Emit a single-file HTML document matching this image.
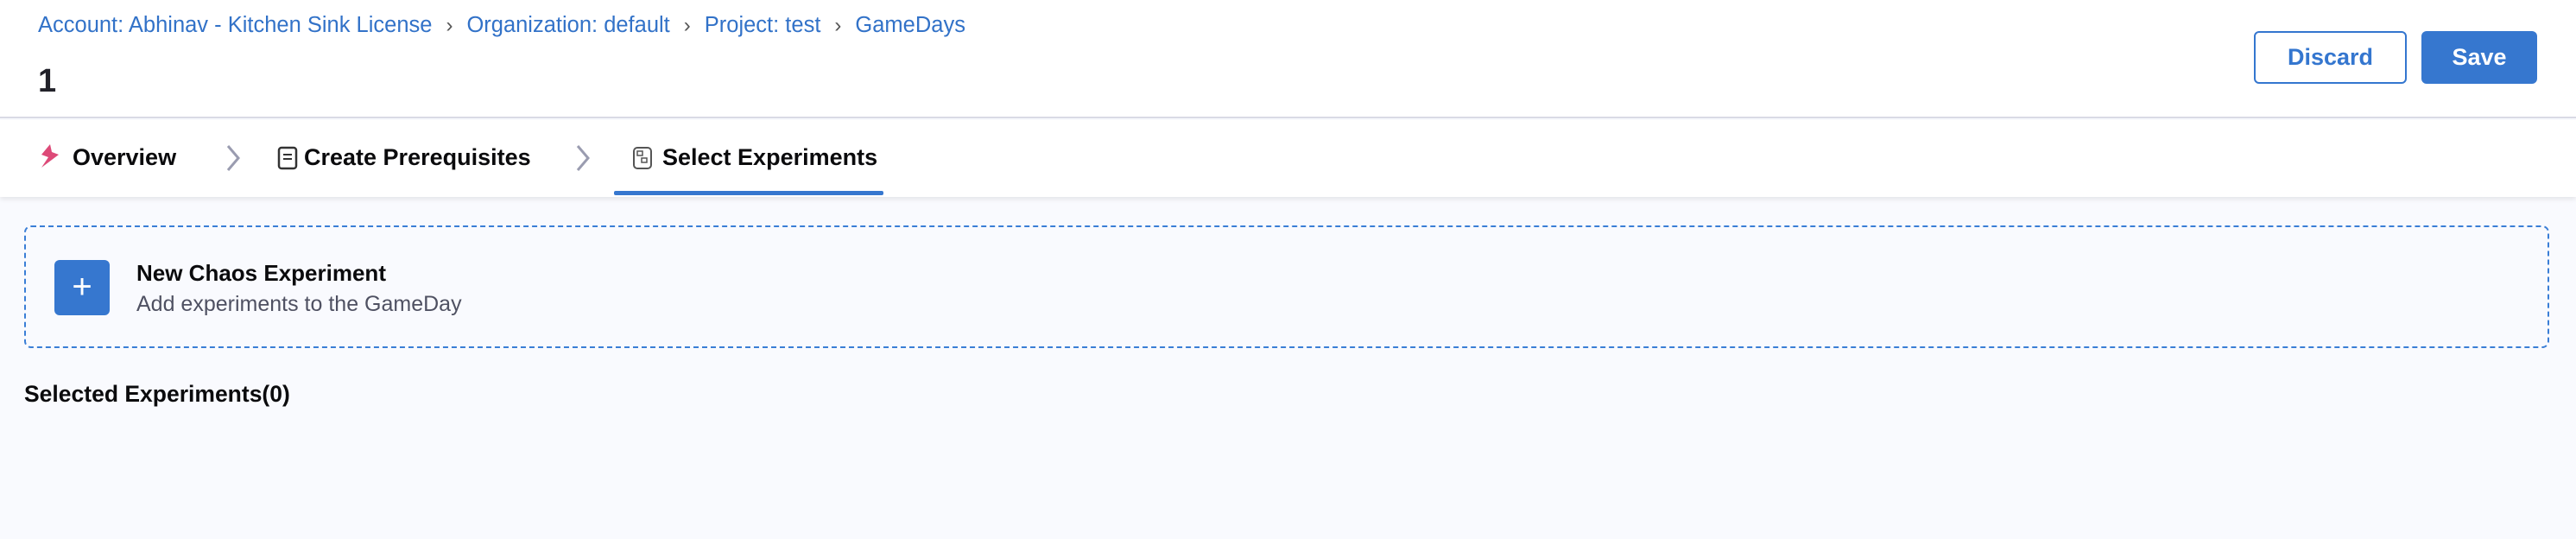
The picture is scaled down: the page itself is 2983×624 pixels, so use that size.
<!DOCTYPE html>
<html><head><meta charset="utf-8"><style>
*{margin:0;padding:0;box-sizing:border-box}
body{width:2983px;height:624px;overflow:hidden;background:#f9fafe;font-family:"Liberation Sans",sans-serif;position:relative}
.hdr{position:absolute;left:0;top:0;width:2983px;height:137px;background:#fff;border-bottom:2px solid #d9dae5}
.bc{position:absolute;left:44px;top:15px;font-size:25.5px;color:#3272c8;white-space:nowrap}
.bc span.s{color:#555;margin:0 16px;font-size:24px}
.t1{position:absolute;left:44px;top:73px;font-size:38px;font-weight:bold;color:#22222a}
.btn{position:absolute;top:36px;height:61px;border-radius:6px;font-size:27px;font-weight:bold;display:flex;align-items:center;justify-content:center}
.tabs{position:absolute;left:0;top:139px;width:2983px;height:89px;background:#fff;box-shadow:0 3px 5px rgba(0,0,0,.08)}
.tab{position:absolute;top:28px;font-size:27px;font-weight:bold;color:#0b0b0d}
.chev{position:absolute;top:26px}
.box{position:absolute;left:28px;top:261px;width:2924px;height:142px;border:2px dashed #3a7ed6;border-radius:8px;background:#f9fafe}
</style></head><body>
<div class="hdr">
<div class="bc">Account: Abhinav - Kitchen Sink License<span class="s">›</span>Organization: default<span class="s">›</span>Project: test<span class="s">›</span>GameDays</div>
<div class="t1">1</div>
<div class="btn" style="left:2610px;width:177px;border:2px solid #3476cf;color:#3476cf;background:#fff">Discard</div>
<div class="btn" style="left:2804px;width:134px;background:#3677cf;color:#fff">Save</div>
</div>
<div class="tabs">
<svg style="position:absolute;left:46px;top:28px" width="24" height="30" viewBox="0 0 24 30"><path d="M12 0L2 12l8 3-8 12 20-15-8-3z" fill="#dd4a78"/></svg>
<div class="tab" style="left:84px">Overview</div>
<svg class="chev" style="left:260px" width="20" height="36" viewBox="0 0 20 36"><path d="M4 4l12 14-12 14" stroke="#9a9cb0" stroke-width="3" fill="none"/></svg>
<svg style="position:absolute;left:321px;top:30px" width="24" height="28" viewBox="0 0 24 28"><rect x="2" y="2" width="20" height="24" rx="3" stroke="#333" stroke-width="2.5" fill="none"/><path d="M7 10h10M7 15h10" stroke="#333" stroke-width="2"/></svg>
<div class="tab" style="left:352px">Create Prerequisites</div>
<svg class="chev" style="left:665px" width="20" height="36" viewBox="0 0 20 36"><path d="M4 4l12 14-12 14" stroke="#9a9cb0" stroke-width="3" fill="none"/></svg>
<svg style="position:absolute;left:731px;top:29px" width="26" height="30" viewBox="0 0 26 30"><rect x="3" y="3" width="20" height="24" rx="4" stroke="#555" stroke-width="2" fill="none"/><rect x="7" y="7" width="6" height="5" stroke="#555" stroke-width="1.5" fill="none"/><rect x="12" y="15" width="6" height="5" stroke="#555" stroke-width="1.5" fill="none"/></svg>
<div class="tab" style="left:767px">Select Experiments</div>
<div style="position:absolute;left:711px;top:82px;width:312px;height:5px;background:#3677cf;border-radius:2px"></div>
</div>
<div class="box">
<div style="position:absolute;left:33px;top:38px;width:64px;height:64px;background:#3677cf;border-radius:6px;color:#fff;font-size:40px;text-align:center;line-height:62px">+</div>
<div style="position:absolute;left:128px;top:38px;font-size:26px;font-weight:bold;color:#0b0b0d">New Chaos Experiment</div>
<div style="position:absolute;left:128px;top:75px;font-size:25px;color:#4f5162">Add experiments to the GameDay</div>
</div>
<div style="position:absolute;left:28px;top:441px;font-size:26.5px;font-weight:bold;color:#0b0b0d">Selected Experiments(0)</div>
</body></html>
